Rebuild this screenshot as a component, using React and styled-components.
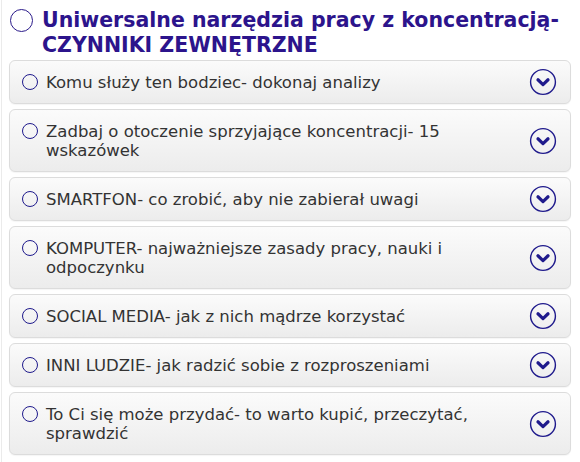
import React from 'react';
import styled, { createGlobalStyle } from 'styled-components';

const GlobalStyle = createGlobalStyle`
    html, body {
        margin: 0;
        padding: 0;
        background: #ffffff;
    }
    body {
        font-family: "DejaVu Sans", Verdana, sans-serif;
    }
`;

const Page = styled.div`
    margin-left: 1px;
    border-left: 1px solid #ebebeb;
    padding: 8px 9px 10px 7px;
    min-height: 444px;
`;

const Title = styled.h1`
    display: flex;
    align-items: flex-start;
    gap: 9px;
    margin: 0 0 2px 1px;
    font-size: 20.5px;
    line-height: 25px;
    font-weight: bold;
    color: #2c148c;
`;

const TitleRing = styled.span`
    flex: 0 0 auto;
    width: 21px;
    height: 21px;
    margin-top: 1px;
    border: 1.6px solid #2a1a8a;
    border-radius: 50%;
`;

const List = styled.div`
    display: flex;
    flex-direction: column;
    gap: 5px;
`;

const Card = styled.div`
    display: flex;
    align-items: center;
    gap: 12px;
    padding: 7px 13px 7px 12px;
    border: 1px solid #dcdcdc;
    border-radius: 6px;
    background: linear-gradient(to bottom, #fbfbfb 0%, #ececec 100%);
    box-shadow: 0 1px 1px rgba(0, 0, 0, 0.04);
`;

const Label = styled.div`
    flex: 1;
    display: flex;
    align-items: flex-start;
    gap: 8px;
    padding: 4.5px 0;
    font-size: 16.5px;
    line-height: 19px;
    color: #333333;
`;

const Ring = styled.span`
    flex: 0 0 auto;
    width: 14px;
    height: 14px;
    margin-top: 1.5px;
    border: 1.6px solid #1f1a8c;
    border-radius: 50%;
`;

const Toggle = styled.button`
    flex: 0 0 auto;
    width: 28px;
    height: 28px;
    padding: 0;
    border: none;
    background: none;
    display: flex;
    align-items: center;
    justify-content: center;
    cursor: pointer;
`;

const ChevronCircle = () => (
    <svg width="30" height="30" viewBox="0 0 30 30">
        <circle cx="15" cy="15" r="13.3" fill="none" stroke="#1f1a8c" strokeWidth="1.5" />
        <path d="M9.6 12.6 L15 17.8 L20.4 12.6" fill="none" stroke="#1f1a8c" strokeWidth="3.4" strokeLinecap="round" strokeLinejoin="round" />
    </svg>
);

const items = [
    'Komu służy ten bodziec- dokonaj analizy',
    'Zadbaj o otoczenie sprzyjające koncentracji- 15 wskazówek',
    'SMARTFON- co zrobić, aby nie zabierał uwagi',
    'KOMPUTER- najważniejsze zasady pracy, nauki i odpoczynku',
    'SOCIAL MEDIA- jak z nich mądrze korzystać',
    'INNI LUDZIE- jak radzić sobie z rozproszeniami',
    'To Ci się może przydać- to warto kupić, przeczytać, sprawdzić',
];

const App = () => (
    <>
        <GlobalStyle />
        <Page>
            <Title>
                <TitleRing />
                <span>Uniwersalne narzędzia pracy z koncentracją-<br />CZYNNIKI ZEWNĘTRZNE</span>
            </Title>
            <List>
                {items.map((text) => (
                    <Card key={text}>
                        <Label>
                            <Ring />
                            <span>{text}</span>
                        </Label>
                        <Toggle aria-label="Rozwiń">
                            <ChevronCircle />
                        </Toggle>
                    </Card>
                ))}
            </List>
        </Page>
    </>
);

export default App;
